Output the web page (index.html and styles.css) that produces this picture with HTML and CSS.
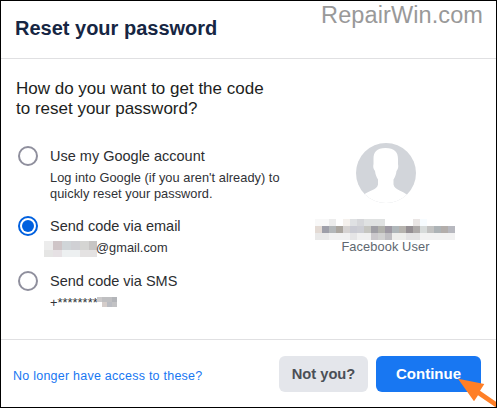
FILE: index.html
```html
<!DOCTYPE html>
<html lang="en">
<head>
  <meta charset="UTF-8">
  <meta name="viewport" content="width=device-width, initial-scale=1">
  <title>Reset your password</title>
  <link rel="stylesheet" href="styles.css">
</head>
<body>
  <div class="dialog">
    <div class="header">
      <h1>Reset your password</h1>
      <span class="site">RepairWin.com</span>
    </div>
    <div class="content">
      <div class="options">
        <h2>How do you want to get the code<br>to reset your password?</h2>
        <div class="option google">
          <span class="radio"></span>
          <div class="text">
            <div class="name">Use my Google account</div>
            <div class="detail">Log into Google (if you aren't already) to<br>quickly reset your password.</div>
          </div>
        </div>
        <div class="option email">
          <span class="radio checked"></span>
          <div class="text">
            <div class="name">Send code via email</div>
            <div class="detail masked">
              <svg class="mask-email" width="53" height="16" viewBox="0 0 53 16" shape-rendering="crispEdges">
                <path fill="#ececec" d="M0 0h9v9H0z"/>
                <path fill="#cfc5c7" d="M9 0h9v9H9z"/>
                <path fill="#d0d5d8" d="M18 0h9v9h-9z"/>
                <path fill="#d0d0d4" d="M27 0h9v9h-9z"/>
                <path fill="#d5d5d3" d="M36 0h9v9h-9z"/>
                <path fill="#c7c5c4" d="M45 0h8v9h-8z"/>
                <path fill="#e5e5e4" d="M0 9h9v7H0z"/>
                <path fill="#e6e1e4" d="M9 9h9v7H9z"/>
                <path fill="#edf0f1" d="M18 9h18v7H18z"/>
                <path fill="#e4e2e2" d="M36 9h17v7H36z"/>
              </svg><span class="domain">@gmail.com</span>
            </div>
          </div>
        </div>
        <div class="option sms">
          <span class="radio"></span>
          <div class="text">
            <div class="name">Send code via SMS</div>
            <div class="detail masked">
              <span class="phone">+********</span><svg class="mask-sms" width="20" height="10" viewBox="0 0 20 10" shape-rendering="crispEdges">
                <path fill="#cbc9ca" d="M0 0h5v5H0z"/>
                <path fill="#bfbfc1" d="M5 0h10v5H5z"/>
                <path fill="#b3b5b9" d="M15 0h5v5h-5z"/>
                <path fill="#d5cdca" d="M5 5h5v5H5z"/>
                <path fill="#babcc2" d="M10 5h5v5h-5z"/>
                <path fill="#c2c2c4" d="M15 5h5v5h-5z"/>
              </svg>
            </div>
          </div>
        </div>
      </div>
      <div class="user">
        <svg class="avatar" width="60" height="60" viewBox="0 0 60 60">
          <clipPath id="round"><circle cx="30" cy="30" r="30"/></clipPath>
          <g clip-path="url(#round)">
            <path fill="#d2d5da" d="M0 0h60v60H0z"/>
            <path fill="#fff" d="M29.500 5C38.500 5 42 9 42 16v5c.7 3 0 5-1.500 7-.5 4-1.500 6-3 8.500v5c.5 3 3 4.500 6 6 3 1.300 5.500 2.500 8 4.500v8H8v-8.500c2.500-2 5-3 8-4.300 3-1.400 5.500-2.700 6-5.700v-5c-1.500-2.500-2.500-4.500-3-8.500-1.500-2-2.200-4-1.500-7v-5c0-7 3-11 12-11z"/>
          </g>
        </svg>
        <svg class="mask-user" width="140" height="21" viewBox="0 0 20 3" preserveAspectRatio="none" shape-rendering="crispEdges">
          <path fill="#f8f8f8" d="M0 0h2v1H0z"/>
          <path fill="#ececec" d="M2 0h1v1H2z"/>
          <path fill="#f5f1ed" d="M4 0h1v1H4z"/>
          <path fill="#dfe1e3" d="M5 0h1v1H5z"/>
          <path fill="#d6d7da" d="M6 0h1v1H6z"/>
          <path fill="#e0e2e2" d="M7 0h3v1H7z"/>
          <path fill="#eae6e5" d="M14 0h1v1h-1z"/>
          <path fill="#f7fcff" d="M15 0h1v1h-1z"/>
          <path fill="#e3dad4" d="M0 1h1v1H0z"/>
          <path fill="#9e9fa9" d="M1 1h1v1H1z"/>
          <path fill="#b3b7b9" d="M2 1h1v1H2z"/>
          <path fill="#aba69f" d="M3 1h1v1H3z"/>
          <path fill="#d6d3d2" d="M4 1h1v1H4z"/>
          <path fill="#cacbd3" d="M5 1h1v1H5z"/>
          <path fill="#cdced4" d="M6 1h1v1H6z"/>
          <path fill="#c6c6c1" d="M7 1h1v1H7z"/>
          <path fill="#a09fa5" d="M8 1h1v1H8z"/>
          <path fill="#b1b1ac" d="M9 1h1v1H9z"/>
          <path fill="#9e99a3" d="M10 1h1v1h-1z"/>
          <path fill="#b0b7ba" d="M11 1h1v1h-1z"/>
          <path fill="#b6b3ae" d="M12 1h1v1h-1z"/>
          <path fill="#958f93" d="M13 1h1v1h-1z"/>
          <path fill="#aeaaa9" d="M14 1h1v1h-1z"/>
          <path fill="#d7dbda" d="M15 1h1v1h-1z"/>
          <path fill="#c2c2c1" d="M16 1h1v1h-1z"/>
          <path fill="#adb3b6" d="M17 1h1v1h-1z"/>
          <path fill="#b3aeab" d="M18 1h1v1h-1z"/>
          <path fill="#b7b8bf" d="M19 1h1v1h-1z"/>
          <path fill="#e9e9e9" d="M0 2h2v1H0z"/>
          <path fill="#f1f1f1" d="M2 2h3v1H2z"/>
          <path fill="#e5e5e6" d="M5 2h1v1H5z"/>
          <path fill="#f0f0f0" d="M6 2h2v1H6z"/>
          <path fill="#cbc8cc" d="M8 2h1v1H8z"/>
          <path fill="#d1d1d1" d="M9 2h1v1H9z"/>
          <path fill="#bfbec2" d="M10 2h1v1h-1z"/>
          <path fill="#eeeeec" d="M11 2h2v1h-2z"/>
          <path fill="#e4e3e4" d="M13 2h2v1h-2z"/>
          <path fill="#f2f2f2" d="M15 2h5v1h-5z"/>
        </svg>
        <div class="role">Facebook User</div>
      </div>
    </div>
    <div class="footer">
      <a class="link">No longer have access to these?</a>
      <button class="secondary">Not you?</button>
      <button class="primary">Continue</button>
    </div>
    <svg class="arrow" width="38" height="29" viewBox="0 0 38 29">
      <path fill="#ff7f27" d="M0 .7L26.300 6 22 12.700l16 11V29h-.7L20 17.300l-4 6z"/>
    </svg>
  </div>
</body>
</html>
```
FILE: styles.css
```css
* {
  box-sizing: border-box;
}
body {
  margin: 0;
  background-color: white;
  font-family: "Liberation Sans", Arial, sans-serif;
}
h1, h2 {
  margin: 0;
}
.dialog {
  position: relative;
  display: flex;
  flex-direction: column;
  width: 497px;
  height: 408px;
  border: 1px solid black;
  overflow: hidden;
}
.header {
  display: flex;
  justify-content: space-between;
  height: 58px;
  padding: 0 13px 0 14px;
  border-bottom: 1px solid #e0e0e2;
}
h1 {
  padding-top: 15px;
  font-size: 20px;
  line-height: 24px;
  color: #162643;
}
.site {
  font-size: 23.500px;
  line-height: 28px;
  letter-spacing: 0.1px;
  color: #999;
}
.content {
  display: flex;
  height: 280px;
}
.options {
  width: 302px;
  padding: 20px 0 0 15px;
}
h2 {
  font-size: 17px;
  font-weight: normal;
  line-height: 20px;
  color: #1c1e21;
}
.option {
  display: flex;
  padding-left: 2px;
}
.google {
  margin-top: 27px;
}
.email {
  margin-top: 15px;
}
.sms {
  margin-top: 14px;
}
.radio {
  width: 20px;
  height: 20px;
  border: 2px solid #8f8f9d;
  border-radius: 50%;
}
.checked {
  padding: 2px;
  border-color: #0060df;
  background: #0060df content-box;
}
.text {
  margin-left: 12px;
}
.name {
  font-size: 14.500px;
  line-height: 20px;
  color: #2c2e31;
}
.detail {
  margin-top: 4px;
  font-size: 12.800px;
  line-height: 16px;
  letter-spacing: 0.040px;
  color: #303236;
}
.masked {
  display: flex;
  margin-top: 4px;
}
.email .name {
  margin-top: -1px;
}
.email .radio {
  margin-top: -1px;
}
.mask-email {
  margin-top: 1px;
  margin-left: -6px;
}
.domain {
  margin-left: -1px;
}
.mask-sms {
  margin-top: 2px;
  margin-left: -1px;
}
.user {
  display: flex;
  flex: 1;
  flex-direction: column;
  align-items: center;
  padding: 84px 28px 0 0;
}
.mask-user {
  margin-top: 16px;
  margin-right: 2px;
}
.role {
  margin-top: -1px;
  font-size: 12.800px;
  line-height: 15px;
  letter-spacing: 0.1px;
  color: #606770;
}
.footer {
  display: flex;
  flex: 1;
  align-items: center;
  padding: 0 15px 0 12px;
  border-top: 1px solid #e0e0e2;
}
.link {
  flex: 1;
  padding-top: 5px;
  white-space: nowrap;
  font-size: 12.500px;
  letter-spacing: 0.240px;
  color: #1877f2;
}
button {
  height: 36px;
  margin-left: 8px;
  padding: 0;
  border: none;
  border-radius: 6px;
  font-family: inherit;
  font-size: 15px;
  font-weight: bold;
}
.secondary {
  width: 89px;
  background-color: #e4e6eb;
  color: #4b4f56;
  font-size: 14.700px;
}
.primary {
  width: 105px;
  background-color: #1877f2;
  color: white;
}
.arrow {
  position: absolute;
  top: 377px;
  left: 457px;
}
```
